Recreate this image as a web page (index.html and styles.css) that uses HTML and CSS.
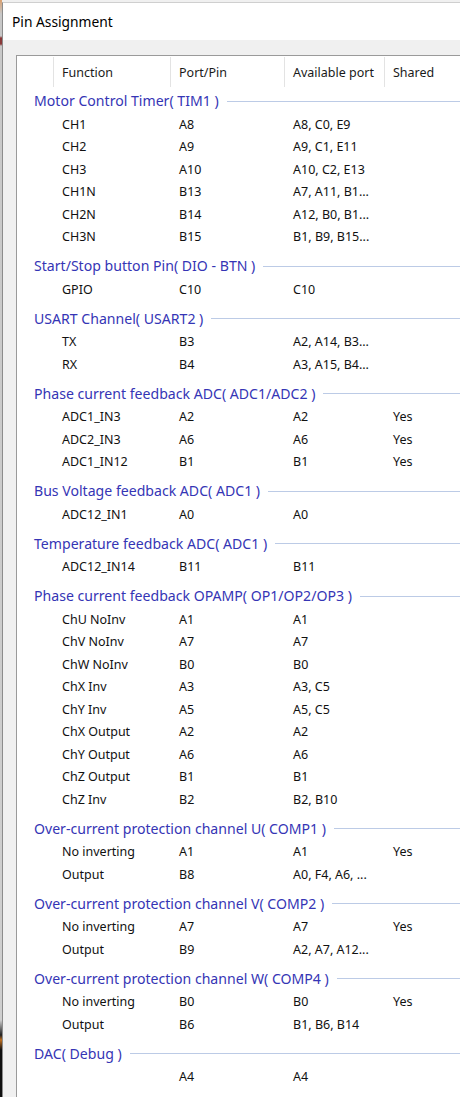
FILE: index.html
```html
<!DOCTYPE html>
<html>
<head>
<meta charset="utf-8">
<title>Pin Assignment</title>
<link rel="stylesheet" href="styles.css">
</head>
<body>
<div class="screen">
  <div class="strip"></div>
  <div class="window">
    <div class="titlebar">Pin Assignment</div>
    <div class="client">
      <div class="list">
        <div class="hdr">
          <div class="hcell c0"></div>
          <div class="hcell c1">Function</div>
          <div class="hcell c2">Port/Pin</div>
          <div class="hcell c3">Available port</div>
          <div class="hcell c4">Shared</div>
        </div>

        <div class="group">
          <div class="gtitle"><span>Motor Control Timer( TIM1 )</span><i class="gline"></i></div>
          <div class="row"><span></span><span>CH1</span><span>A8</span><span>A8, C0, E9</span><span></span></div>
          <div class="row"><span></span><span>CH2</span><span>A9</span><span>A9, C1, E11</span><span></span></div>
          <div class="row"><span></span><span>CH3</span><span>A10</span><span>A10, C2, E13</span><span></span></div>
          <div class="row"><span></span><span>CH1N</span><span>B13</span><span>A7, A11, B1...</span><span></span></div>
          <div class="row"><span></span><span>CH2N</span><span>B14</span><span>A12, B0, B1...</span><span></span></div>
          <div class="row"><span></span><span>CH3N</span><span>B15</span><span>B1, B9, B15...</span><span></span></div>
        </div>

        <div class="group">
          <div class="gtitle"><span>Start/Stop button Pin( DIO - BTN )</span><i class="gline"></i></div>
          <div class="row"><span></span><span>GPIO</span><span>C10</span><span>C10</span><span></span></div>
        </div>

        <div class="group">
          <div class="gtitle"><span>USART Channel( USART2 )</span><i class="gline"></i></div>
          <div class="row"><span></span><span>TX</span><span>B3</span><span>A2, A14, B3...</span><span></span></div>
          <div class="row"><span></span><span>RX</span><span>B4</span><span>A3, A15, B4...</span><span></span></div>
        </div>

        <div class="group">
          <div class="gtitle"><span>Phase current feedback ADC( ADC1/ADC2 )</span><i class="gline"></i></div>
          <div class="row"><span></span><span>ADC1_IN3</span><span>A2</span><span>A2</span><span>Yes</span></div>
          <div class="row"><span></span><span>ADC2_IN3</span><span>A6</span><span>A6</span><span>Yes</span></div>
          <div class="row"><span></span><span>ADC1_IN12</span><span>B1</span><span>B1</span><span>Yes</span></div>
        </div>

        <div class="group">
          <div class="gtitle"><span>Bus Voltage feedback ADC( ADC1 )</span><i class="gline"></i></div>
          <div class="row"><span></span><span>ADC12_IN1</span><span>A0</span><span>A0</span><span></span></div>
        </div>

        <div class="group">
          <div class="gtitle"><span>Temperature feedback ADC( ADC1 )</span><i class="gline"></i></div>
          <div class="row"><span></span><span>ADC12_IN14</span><span>B11</span><span>B11</span><span></span></div>
        </div>

        <div class="group">
          <div class="gtitle"><span>Phase current feedback OPAMP( OP1/OP2/OP3 )</span><i class="gline"></i></div>
          <div class="row"><span></span><span>ChU NoInv</span><span>A1</span><span>A1</span><span></span></div>
          <div class="row"><span></span><span>ChV NoInv</span><span>A7</span><span>A7</span><span></span></div>
          <div class="row"><span></span><span>ChW NoInv</span><span>B0</span><span>B0</span><span></span></div>
          <div class="row"><span></span><span>ChX Inv</span><span>A3</span><span>A3, C5</span><span></span></div>
          <div class="row"><span></span><span>ChY Inv</span><span>A5</span><span>A5, C5</span><span></span></div>
          <div class="row"><span></span><span>ChX Output</span><span>A2</span><span>A2</span><span></span></div>
          <div class="row"><span></span><span>ChY Output</span><span>A6</span><span>A6</span><span></span></div>
          <div class="row"><span></span><span>ChZ Output</span><span>B1</span><span>B1</span><span></span></div>
          <div class="row"><span></span><span>ChZ Inv</span><span>B2</span><span>B2, B10</span><span></span></div>
        </div>

        <div class="group">
          <div class="gtitle"><span>Over-current protection channel U( COMP1 )</span><i class="gline"></i></div>
          <div class="row"><span></span><span>No inverting</span><span>A1</span><span>A1</span><span>Yes</span></div>
          <div class="row"><span></span><span>Output</span><span>B8</span><span>A0, F4, A6, ...</span><span></span></div>
        </div>

        <div class="group">
          <div class="gtitle"><span>Over-current protection channel V( COMP2 )</span><i class="gline"></i></div>
          <div class="row"><span></span><span>No inverting</span><span>A7</span><span>A7</span><span>Yes</span></div>
          <div class="row"><span></span><span>Output</span><span>B9</span><span>A2, A7, A12...</span><span></span></div>
        </div>

        <div class="group">
          <div class="gtitle"><span>Over-current protection channel W( COMP4 )</span><i class="gline"></i></div>
          <div class="row"><span></span><span>No inverting</span><span>B0</span><span>B0</span><span>Yes</span></div>
          <div class="row"><span></span><span>Output</span><span>B6</span><span>B1, B6, B14</span><span></span></div>
        </div>

        <div class="group">
          <div class="gtitle"><span>DAC( Debug )</span><i class="gline"></i></div>
          <div class="row"><span></span><span></span><span>A4</span><span>A4</span><span></span></div>
        </div>
      </div>
    </div>
  </div>
</div>
</body>
</html>
```

FILE: styles.css
```css
html, body {
  margin: 0;
  padding: 0;
  width: 460px;
  height: 1097px;
  overflow: hidden;
  background: #f0f0f0;
}

.screen {
  display: flex;
  align-items: flex-start;
  width: 460px;
  height: 1097px;
  overflow: hidden;
  font-family: "Noto Sans", "Open Sans", sans-serif;
  font-size: 12.5px;
  color: #111;
}

.strip {
  flex: 0 0 2px;
  align-self: stretch;
  background: linear-gradient(to bottom, #d9a070 0px, #c8c8c8 14px, #c8c8c8 36px, #8a3a3a 38px, #8a3a3a 44px, #c8c8c8 46px, #cfcfcf 1020px, #202020 1035px, #c07020 1040px, #101010 1050px, #101010 1097px);
}

.window {
  flex: 0 0 640px;
  margin-top: 2px;
  border-left: 1px solid #8c8c8c;
  border-top: 1px solid #cfcfcf;
  background: #f0f0f0;
}

.titlebar {
  height: 37px;
  background: #ffffff;
  display: flex;
  align-items: center;
  padding-left: 9px;
  font-size: 13.8px;
  color: #000;
  box-sizing: border-box;
}

.client {
  padding: 15px 0 0 13px;
}

.list {
  background: #ffffff;
  border: 1px solid #9a9a9a;
  width: 620px;
  padding-bottom: 40px;
}

.hdr {
  display: grid;
  grid-template-columns: 37px 117px 114px 100px 1fr;
  height: 32px;
  align-items: center;
}

.hcell {
  height: 30px;
  display: flex;
  align-items: center;
  padding-left: 8px;
  border-right: 1px solid #e3e3e3;
  color: #1a1a1a;
}

.hcell.c4 {
  border-right: none;
}

.group {
  margin-bottom: 5px;
}

.gtitle {
  height: 25px;
  display: flex;
  align-items: center;
  padding-left: 17px;
  color: #3535b5;
  font-size: 14.1px;
}

.gtitle span {
  white-space: nowrap;
}

.gline {
  flex: 1;
  height: 1px;
  background: #bccbe6;
  margin-left: 8px;
  margin-top: 1px;
}

.row {
  display: grid;
  grid-template-columns: 37px 117px 114px 100px 1fr;
  height: 22.5px;
  align-items: center;
}

.row span {
  padding-left: 8px;
  white-space: nowrap;
}
```
